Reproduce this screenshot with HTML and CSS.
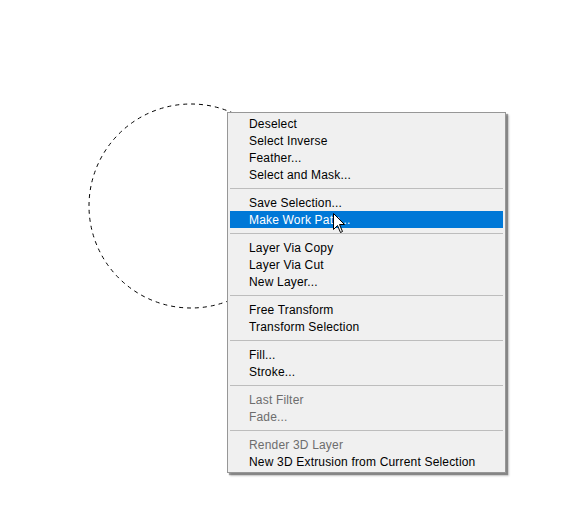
FILE: index.html
```html
<!DOCTYPE html>
<html>
<head>
<meta charset="utf-8">
<link rel="stylesheet" href="styles.css">
</head>
<body>
<div class="canvas">
  <svg class="marquee" width="581" height="516" viewBox="0 0 581 516">
    <circle cx="191" cy="206" r="102" fill="none" stroke="#000" stroke-width="1" stroke-dasharray="4 4"/>
  </svg>
  <div class="menu">
    <div class="group">
      <div class="item">Deselect</div>
      <div class="item">Select Inverse</div>
      <div class="item">Feather...</div>
      <div class="item">Select and Mask...</div>
    </div>
    <div class="sep"></div>
    <div class="group">
      <div class="item">Save Selection...</div>
      <div class="item active">Make Work Path...</div>
    </div>
    <div class="sep"></div>
    <div class="group">
      <div class="item">Layer Via Copy</div>
      <div class="item">Layer Via Cut</div>
      <div class="item">New Layer...</div>
    </div>
    <div class="sep"></div>
    <div class="group">
      <div class="item">Free Transform</div>
      <div class="item">Transform Selection</div>
    </div>
    <div class="sep"></div>
    <div class="group">
      <div class="item">Fill...</div>
      <div class="item">Stroke...</div>
    </div>
    <div class="sep"></div>
    <div class="group">
      <div class="item disabled">Last Filter</div>
      <div class="item disabled">Fade...</div>
    </div>
    <div class="sep"></div>
    <div class="group">
      <div class="item disabled">Render 3D Layer</div>
      <div class="item">New 3D Extrusion from Current Selection</div>
    </div>
  </div>
  <svg class="cursor" width="14" height="22" viewBox="0 0 14 22">
    <path d="M0.5 0.5 L0.5 16.5 L4.5 12.5 L7.5 19.5 L9.5 18.5 L6.5 11.5 L11.5 11.5 Z" fill="#fff" stroke="#000" stroke-width="1" stroke-linejoin="miter"/>
  </svg>
</div>
</body>
</html>
```

FILE: styles.css
```css
html, body {
  margin: 0;
  padding: 0;
  background: #fff;
}

.canvas {
  position: relative;
  width: 581px;
  height: 516px;
  overflow: hidden;
  font-family: "Liberation Sans", Arial, sans-serif;
  font-size: 12px;
  letter-spacing: 0.18px;
}

.marquee {
  position: absolute;
  left: 0;
  top: 0;
}

.menu {
  position: absolute;
  left: 227px;
  top: 112px;
  box-sizing: border-box;
  width: 279px;
  padding: 2px;
  background: #f0f0f0;
  border: 1px solid #979797;
  box-shadow: 2px 2px 1px rgba(0, 0, 0, 0.35), 3px 3px 2px rgba(0, 0, 0, 0.2);
  display: flex;
  flex-direction: column;
}

.group {
  display: flex;
  flex-direction: column;
}

.item {
  height: 16px;
  padding-top: 1px;
  line-height: 17px;
  padding-left: 19px;
  color: #000;
  white-space: nowrap;
}

.item.active {
  background: #0078d7;
  color: #fff;
}

.item.disabled {
  color: #6d6d6d;
}

.sep {
  height: 1px;
  margin: 5px 0;
  background: #bdbdbd;
}

.cursor {
  position: absolute;
  left: 333px;
  top: 213px;
}
```
